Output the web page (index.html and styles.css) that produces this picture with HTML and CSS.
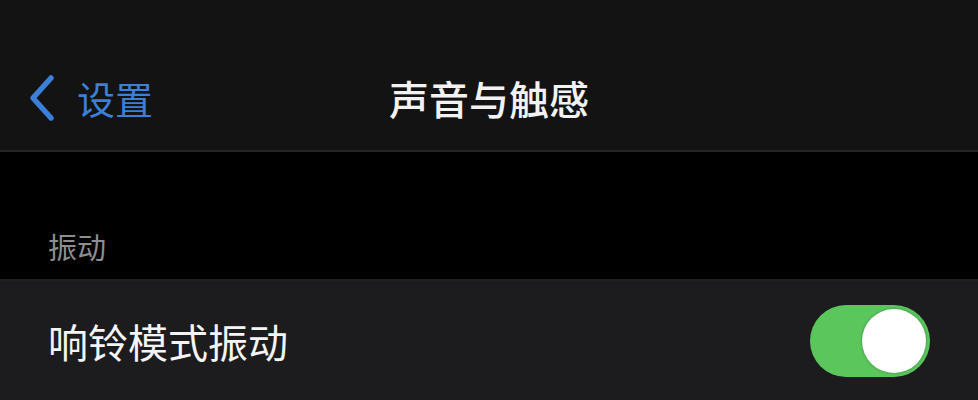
FILE: index.html
```html
<!DOCTYPE html>
<html lang="zh-CN">
<head>
<meta charset="utf-8">
<link rel="stylesheet" href="styles.css">
</head>
<body>
<div class="screen">
  <header class="navbar">
    <div class="back">
      <svg class="chevron" width="34" height="48" viewBox="0 0 34 48">
        <polyline points="26,4 8,24 26,44" fill="none" stroke="#3b7fd8" stroke-width="5.5" stroke-linecap="round" stroke-linejoin="round"/>
      </svg>
      <span class="back-label">设置</span>
    </div>
    <div class="title">声音与触感</div>
  </header>
  <div class="section-gap">
    <div class="section-header">振动</div>
  </div>
  <div class="row">
    <span class="row-label">响铃模式振动</span>
    <div class="toggle on"><div class="knob"></div></div>
  </div>
</div>
</body>
</html>
```
FILE: styles.css
```css
html, body {
  margin: 0;
  padding: 0;
  background: #000;
}
.screen {
  width: 978px;
  height: 400px;
  overflow: hidden;
  font-family: "Noto Sans CJK SC", "Noto Sans", sans-serif;
  background: #000;
}
.navbar {
  position: relative;
  height: 152px;
  background: #131313;
  border-bottom: 2px solid #252525;
  display: flex;
  align-items: center;
  box-sizing: border-box;
  padding-top: 46px;
}
.back {
  display: flex;
  align-items: center;
  padding-left: 25px;
  gap: 18px;
}
.back-label {
  color: #3b7fd8;
  font-size: 38px;
  line-height: 1;
}
.title {
  position: absolute;
  left: 0;
  right: 0;
  top: 46px;
  bottom: 0;
  display: flex;
  align-items: center;
  justify-content: center;
  color: #f2f2f2;
  font-size: 40px;
  font-weight: 500;
  pointer-events: none;
}
.section-gap {
  height: 129px;
  display: flex;
  align-items: flex-end;
  padding-left: 48px;
  padding-bottom: 18px;
  box-sizing: border-box;
  border-bottom: 2px solid #202020;
}
.section-header {
  color: #8e8e90;
  font-size: 29px;
  line-height: 1;
}
.row {
  height: 119px;
  background: #1c1c1e;
  display: flex;
  align-items: center;
  justify-content: space-between;
  padding: 0 48px 0 48px;
  box-sizing: border-box;
}
.row-label {
  color: #f4f4f4;
  font-size: 40px;
  line-height: 1;
}
.toggle {
  width: 120px;
  height: 72px;
  border-radius: 36px;
  background: #5ac65c;
  position: relative;
}
.knob {
  position: absolute;
  width: 64px;
  height: 64px;
  border-radius: 50%;
  background: #fff;
  top: 4px;
  right: 4px;
  box-shadow: 0 0 3px rgba(0,0,0,0.3);
}
```
